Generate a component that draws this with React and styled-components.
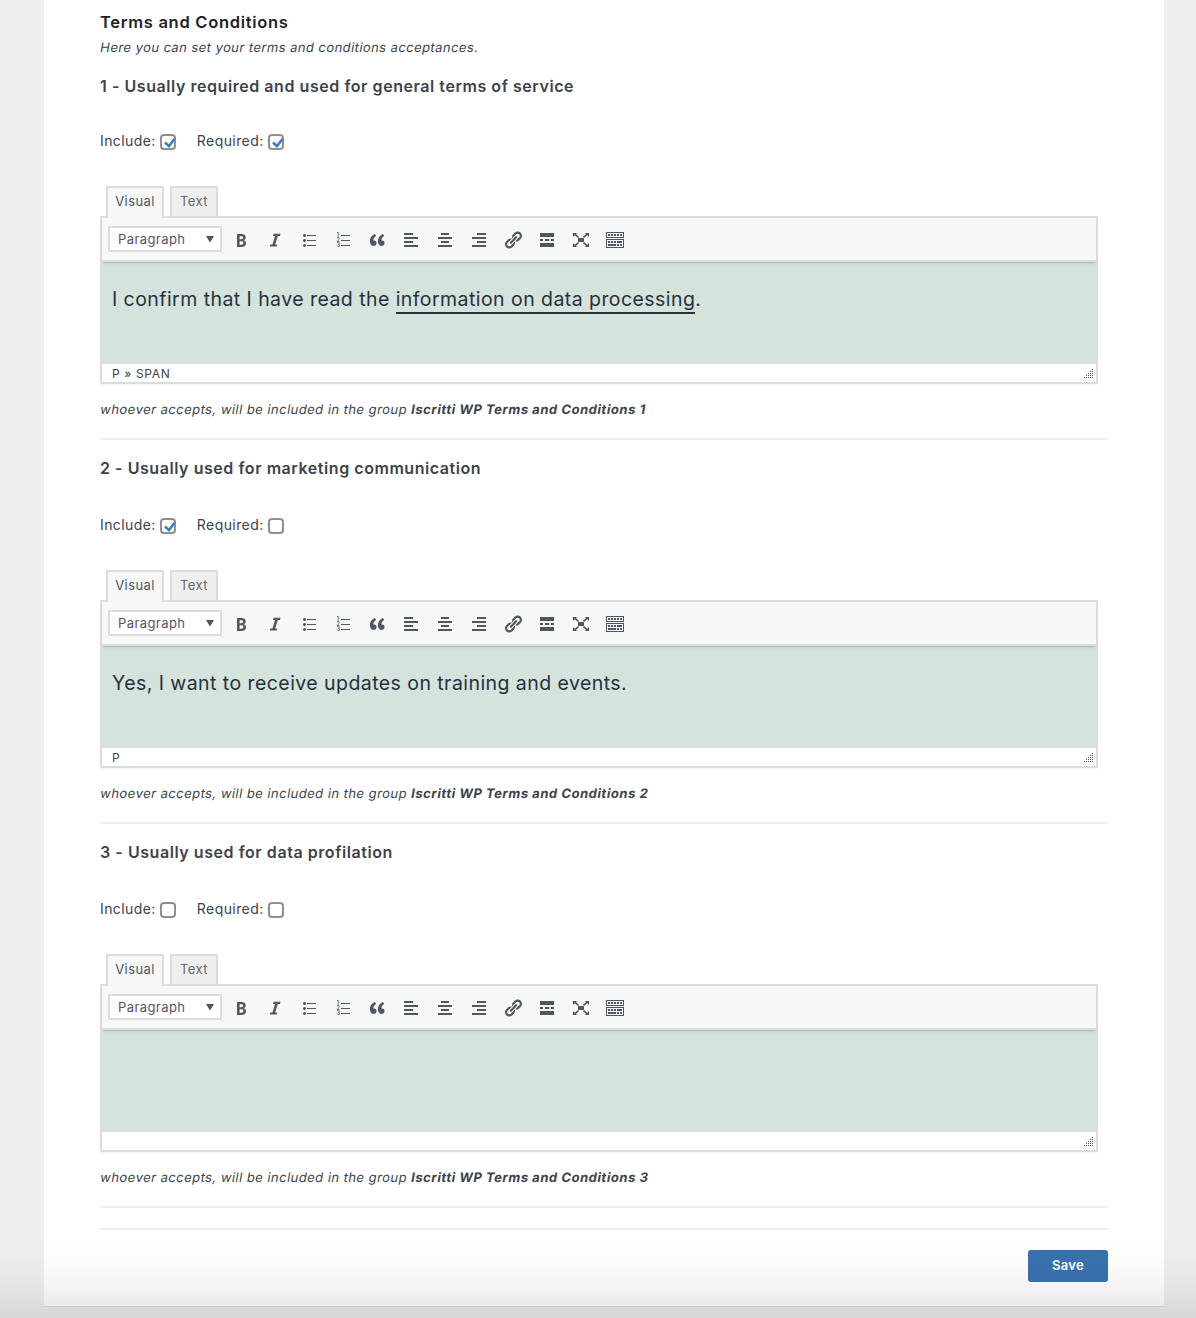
import React, { useState } from 'react';
import styled, { createGlobalStyle } from 'styled-components';

const GlobalStyle = createGlobalStyle`
  *, *::before, *::after { box-sizing: border-box; }
  body {
    margin: 0;
    background: #efefef;
    color: #3c434a;
    font-family: Inter, "Liberation Sans", sans-serif;
    font-size: 14px;
  }
  h2, h3, p { margin: 0; }
`;

const Page = styled.div`
  position: relative;
  height: 1318px;
  padding: 0 32px 0 44px;
  overflow: hidden;
`;

const BottomShade = styled.div`
  position: absolute;
  left: 0;
  right: 0;
  bottom: 0;
  height: 80px;
  pointer-events: none;
  background: linear-gradient(
    rgba(0, 0, 0, 0) 0%,
    rgba(0, 0, 0, 0.01) 28%,
    rgba(0, 0, 0, 0.04) 56%,
    rgba(0, 0, 0, 0.075) 82%,
    rgba(0, 0, 0, 0.11) 100%
  );
`;

const Card = styled.main`
  height: 1307px;
  padding: 10px 56px 0;
  background: #fff;
  border-bottom: 1px solid #d3dfea;
`;

const Title = styled.h2`
  color: #1d2327;
  font-size: 16.5px;
  font-weight: 600;
  line-height: 24px;
  letter-spacing: 0.71px;
`;

const Slanted = styled.p`
  transform: skewX(-10deg);
  font-size: 13px;
  line-height: 20px;
`;

const Intro = styled(Slanted)`
  margin: 3px 0 1px;
  padding-left: 0.5px;
  letter-spacing: 0.435px;
`;

const Section = styled.section`
  padding-top: 16px;
  border-bottom: 2px solid #eeeeef;
  height: ${({ $first }) => ($first ? 382 : 384)}px;
`;

const Heading = styled.h3`
  font-size: 16px;
  font-weight: 600;
  line-height: 24px;
  letter-spacing: 0.555px;
`;

const Options = styled.div`
  display: flex;
  gap: 21px;
  margin-top: ${({ $first }) => ($first ? 33 : 35)}px;
`;

const Option = styled.label`
  display: flex;
  align-items: center;
  gap: 4px;
  height: 20px;
  letter-spacing: 0.42px;
`;

const OptionText = styled.span`
  line-height: 20px;
  padding-bottom: 1px;
`;

const Check = styled.span`
  display: flex;
  width: 16px;
  height: 16px;
  margin-top: 2px;
  border: 2px solid #8c8f94;
  border-radius: 4px;
  background: #fff;

  svg {
    flex: none;
    margin: -2px;
  }
`;

const HiddenInput = styled.input`
  position: absolute;
  opacity: 0;
  pointer-events: none;
`;

const Tabs = styled.div`
  position: relative;
  z-index: 1;
  display: flex;
  align-items: flex-end;
  gap: 6px;
  margin-top: 35px;
  padding-left: 6px;
`;

const Tab = styled.button`
  height: ${({ $active }) => ($active ? 32 : 30)}px;
  width: ${({ $w }) => $w}px;
  margin: 0 0 ${({ $active }) => ($active ? -2 : 0)}px;
  padding: 0 0 ${({ $active }) => ($active ? 4 : 2)}px;
  border: 2px solid #dcdcde;
  border-bottom: 0;
  background: ${({ $active }) => ($active ? '#f6f7f7' : '#efefef')};
  color: ${({ $active }) => ($active ? '#50575e' : '#646970')};
  font: 400 13px Inter, "Liberation Sans", sans-serif;
  letter-spacing: 0.4px;
`;

const EditorBox = styled.div`
  width: 998px;
  height: 168px;
  border: 2px solid #dcdcde;
  box-shadow: 0 1px 1px rgba(0, 0, 0, 0.04);
  display: flex;
  flex-direction: column;
`;

const Toolbar = styled.div`
  position: relative;
  display: flex;
  align-items: center;
  height: 44px;
  flex: none;
  padding: 0 6px;
  background: #f6f7f7;
  border-bottom: 2px solid #dcdcde;
  box-shadow: 0 2px 2px -1px rgba(0, 0, 0, 0.22);
`;

const FormatSelect = styled.button`
  display: flex;
  align-items: center;
  justify-content: space-between;
  width: 114px;
  height: 26px;
  margin: 0 2px 0 0;
  padding: 0 6px 0 8px;
  border: 2px solid #dcdcde;
  background: #fff;
  color: #50575e;
  font: 400 13px Inter, "Liberation Sans", sans-serif;
  letter-spacing: 0.42px;
`;

const ToolButton = styled.button`
  display: grid;
  place-items: center;
  width: 34px;
  height: 30px;
  margin-top: 2px;
  padding: 0;
  border: 0;
  background: none;
  color: #50575e;
`;

const Content = styled.div`
  flex: 1;
  padding: 22px 10px 0;
  background: #d4e3dc;
  color: #28303d;
  font-size: 19.5px;
  line-height: 30px;
  letter-spacing: 0.44px;
`;

const Underlined = styled.span`
  display: inline-block;
  height: 30px;
  border-bottom: 2px solid #28303d;
`;

const StatusBar = styled.div`
  display: flex;
  justify-content: space-between;
  align-items: center;
  height: 20px;
  flex: none;
  padding: 0 2px 0 10px;
  border-top: 2px solid #dcdcde;
  background: #fff;
  font-size: 12px;
  line-height: 18px;
  letter-spacing: 0.65px;
`;

const ElementPath = styled.span`
  padding-top: 2px;
`;

const Note = styled(Slanted)`
  margin-top: 15px;
  padding-left: 0.5px;
  letter-spacing: 0.46px;

  b {
    font-weight: 700;
    letter-spacing: 0.55px;
  }
`;

const Footer = styled.footer`
  display: flex;
  justify-content: flex-end;
  margin-top: 20px;
  padding-top: 20px;
  border-top: 2px solid #eeeeef;
`;

const SaveButton = styled.button`
  width: 80px;
  height: 32px;
  padding: 0 0 2px;
  border: 0;
  border-radius: 3px;
  background: #3972b1;
  color: #fff;
  font: 600 13px Inter, "Liberation Sans", sans-serif;
  letter-spacing: 0.3px;
`;

const dots = [];
for (let row = 0; row < 5; row += 1) {
  for (let col = 4 - row; col < 5; col += 1) dots.push([col * 2, row * 2]);
}

const ResizeGrip = () => (
  <svg width="10" height="10" fill="#50575e" shapeRendering="crispEdges">
    {dots.map(([x, y]) => (
      <rect key={`${x}-${y}`} x={x} y={y + 1} width="1" height="1" />
    ))}
  </svg>
);

const TOOLS = [
  ['Bold', 'M6 4v13h4.54c1.37 0 2.46-.33 3.26-1 .8-.66 1.2-1.58 1.2-2.77 0-.84-.17-1.51-.51-2.01s-.9-.85-1.67-1.03v-.09c.57-.1 1.02-.4 1.36-.9s.51-1.13.51-1.91c0-1.14-.39-1.98-1.17-2.5C12.75 4.26 11.5 4 9.78 4H6zm2.57 5.15V6.26h1.36c.73 0 1.27.11 1.61.32.34.22.51.58.51 1.07 0 .54-.16.92-.47 1.15s-.82.35-1.51.35h-1.5zm0 2.19h1.6c1.44 0 2.16.53 2.16 1.61 0 .6-.17 1.05-.51 1.34s-.86.43-1.57.43H8.57v-3.38z'],
  ['Italic', 'M15.5 3.8H8.6L8 5.9h2.1L7.4 14.5H5.3l-.6 2.1h7l.6-2.1h-2.2l2.7-8.6h2.1z'],
  ['Bulleted list', 'M5.5 7C4.67 7 4 6.33 4 5.5 4 4.68 4.67 4 5.5 4 6.32 4 7 4.68 7 5.5 7 6.33 6.32 7 5.5 7zM8 5h9v1H8V5zm-2.5 7c-.83 0-1.5-.67-1.5-1.5C4 9.68 4.67 9 5.5 9c.82 0 1.5.68 1.5 1.5 0 .83-.68 1.5-1.5 1.5zM8 10h9v1H8v-1zm-2.5 7c-.83 0-1.5-.67-1.5-1.5 0-.82.67-1.5 1.5-1.5.82 0 1.5.68 1.5 1.5 0 .83-.68 1.5-1.5 1.5zM8 15h9v1H8v-1z'],
  ['Numbered list', 'M8 5h9v1H8zM8 10h9v1H8zM8 15h9v1H8z'],
  ['Blockquote', 'M9.49 13.22c0-.74-.2-1.38-.61-1.9-.62-.78-1.83-.88-2.53-.72-.29-1.65 1.11-3.75 2.92-4.65L7.88 4c-2.73 1.3-5.42 4.28-4.96 8.05C3.21 14.43 4.59 16 6.54 16c.85 0 1.56-.25 2.12-.75s.83-1.18.83-2.03zm8.05 0c0-.74-.2-1.38-.61-1.9-.63-.78-1.83-.88-2.53-.72-.29-1.65 1.11-3.75 2.92-4.65L15.93 4c-2.73 1.3-5.41 4.28-4.95 8.05.29 2.38 1.66 3.95 3.61 3.95.85 0 1.56-.25 2.12-.75s.83-1.18.83-2.03z'],
  ['Align left', 'M12 5V3H3v2h9zm5 4V7H3v2h14zm-5 4v-2H3v2h9zm5 4v-2H3v2h14z'],
  ['Align center', 'M14 5V3H6v2h8zm3 4V7H3v2h14zm-3 4v-2H6v2h8zm3 4v-2H3v2h14z'],
  ['Align right', 'M17 5V3H8v2h9zm0 4V7H3v2h14zm0 4v-2H8v2h9zm0 4v-2H3v2h14z'],
  ['Link', 'M17.74 2.76c1.68 1.69 1.68 4.41 0 6.1l-1.53 1.52c-1.12 1.12-2.7 1.47-4.14 1.09l2.62-2.61.76-.77.76-.76c.84-.84.84-2.2 0-3.04-.84-.85-2.2-.85-3.04 0l-.77.76-3.38 3.38c-.37-1.44-.02-3.02 1.1-4.14l1.52-1.53c1.69-1.68 4.42-1.68 6.1 0zM8.59 13.43l5.34-5.34c.42-.42.42-1.1 0-1.52-.44-.43-1.13-.39-1.53 0l-5.33 5.34c-.42.42-.42 1.1 0 1.52.44.43 1.13.39 1.52 0zm-.76 2.29l4.14-4.15c.38 1.44.03 3.02-1.09 4.14l-1.52 1.53c-1.69 1.68-4.41 1.68-6.1 0-1.68-1.68-1.68-4.42 0-6.1l1.53-1.52c1.12-1.12 2.7-1.47 4.14-1.1l-4.14 4.15c-.85.84-.85 2.2 0 3.05.84.84 2.2.84 3.04 0z'],
  ['Read more', 'M17 7V3H3v4h14zM6 11V9H3v2h3zm6 0V9H8v2h4zm5 0V9h-3v2h3zm0 6v-4H3v4h14z'],
  ['Fullscreen', 'M2 3h4L5 4.2l3 2.5L7 8 3.7 5.2 2 7zM18 3h-4l1 1.2-3 2.5L13 8l3.3-2.8L18 7zM2 17h4l-1-1.2 3-2.5L7 12l-3.3 2.8L2 13zM18 17h-4l1-1.2-3-2.5 1-1.3 3.3 2.8L18 13zM7 8h6v4H7z'],
  ['Toolbar toggle', 'M19 2v6H1V2h18zm-1 5V3H2v4h16zM5 4v2H3V4h2zm3 0v2H6V4h2zm3 0v2H9V4h2zm3 0v2h-2V4h2zm3 0v2h-2V4h2zm2 5v9H1V9h18zm-1 8v-7H2v7h16zM5 11v2H3v-2h2zm3 0v2H6v-2h2zm3 0v2H9v-2h2zm6 0v2h-5v-2h5zm-6 3v2H3v-2h8zm3 0v2h-2v-2h2zm3 0v2h-2v-2h2z'],
];

const ListNumber = styled.text`
  font: 600 5.5px Inter, "Liberation Sans", sans-serif;
`;

const ToolIcon = ({ name, path }) => (
  <svg width="20" height="20" viewBox="0 0 20 20" fill="currentColor">
    <path d={path} />
    {name === 'Numbered list' &&
      [1, 2, 3].map((n) => (
        <ListNumber key={n} x="3.4" y={2.3 + n * 5}>{n}</ListNumber>
      ))}
  </svg>
);

function Checkbox({ label, initial }) {
  const [checked, setChecked] = useState(initial);
  return (
    <Option>
      <OptionText>{label}</OptionText>
      <HiddenInput type="checkbox" checked={checked} onChange={() => setChecked(!checked)} />
      <Check>
        {checked && (
          <svg width="16" height="16" viewBox="0 0 16 16" fill="none">
            <path d="M5 8.5l4 3.6 5.7-7.3" stroke="#3d7dc8" strokeWidth="2.6" />
          </svg>
        )}
      </Check>
    </Option>
  );
}

function Editor({ path, children }) {
  return (
    <>
      <Tabs>
        <Tab $active $w={58}>Visual</Tab>
        <Tab $w={48}>Text</Tab>
      </Tabs>
      <EditorBox>
        <Toolbar>
          <FormatSelect>
            Paragraph
            <svg width="8" height="7" fill="#50575e"><path d="M0 0h8L4 6.5z" /></svg>
          </FormatSelect>
          {TOOLS.map(([name, d]) => (
            <ToolButton key={name} aria-label={name}>
              <ToolIcon name={name} path={d} />
            </ToolButton>
          ))}
        </Toolbar>
        <Content>{children}</Content>
        <StatusBar>
          <ElementPath>{path}</ElementPath>
          <ResizeGrip />
        </StatusBar>
      </EditorBox>
    </>
  );
}

const SECTIONS = [
  {
    id: 1,
    heading: '1 - Usually required and used for general terms of service',
    include: true,
    required: true,
    path: 'P » SPAN',
    body: (
      <>I confirm that I have read the <Underlined>information on data processing</Underlined>.</>
    ),
  },
  {
    id: 2,
    heading: '2 - Usually used for marketing communication',
    include: true,
    required: false,
    path: 'P',
    body: 'Yes, I want to receive updates on training and events.',
  },
  { id: 3, heading: '3 - Usually used for data profilation', include: false, required: false, path: '', body: '' },
];

export default function App() {
  return (
    <>
      <GlobalStyle />
      <Page>
        <Card>
          <Title>Terms and Conditions</Title>
          <Intro>Here you can set your terms and conditions acceptances.</Intro>
          {SECTIONS.map((s) => (
            <Section key={s.id} $first={s.id === 1}>
              <Heading>{s.heading}</Heading>
              <Options $first={s.id === 1}>
                <Checkbox label="Include:" initial={s.include} />
                <Checkbox label="Required:" initial={s.required} />
              </Options>
              <Editor path={s.path}>{s.body}</Editor>
              <Note>
                whoever accepts, will be included in the group <b>Iscritti WP Terms and Conditions {s.id}</b>
              </Note>
            </Section>
          ))}
          <Footer>
            <SaveButton>Save</SaveButton>
          </Footer>
        </Card>
        <BottomShade />
      </Page>
    </>
  );
}
